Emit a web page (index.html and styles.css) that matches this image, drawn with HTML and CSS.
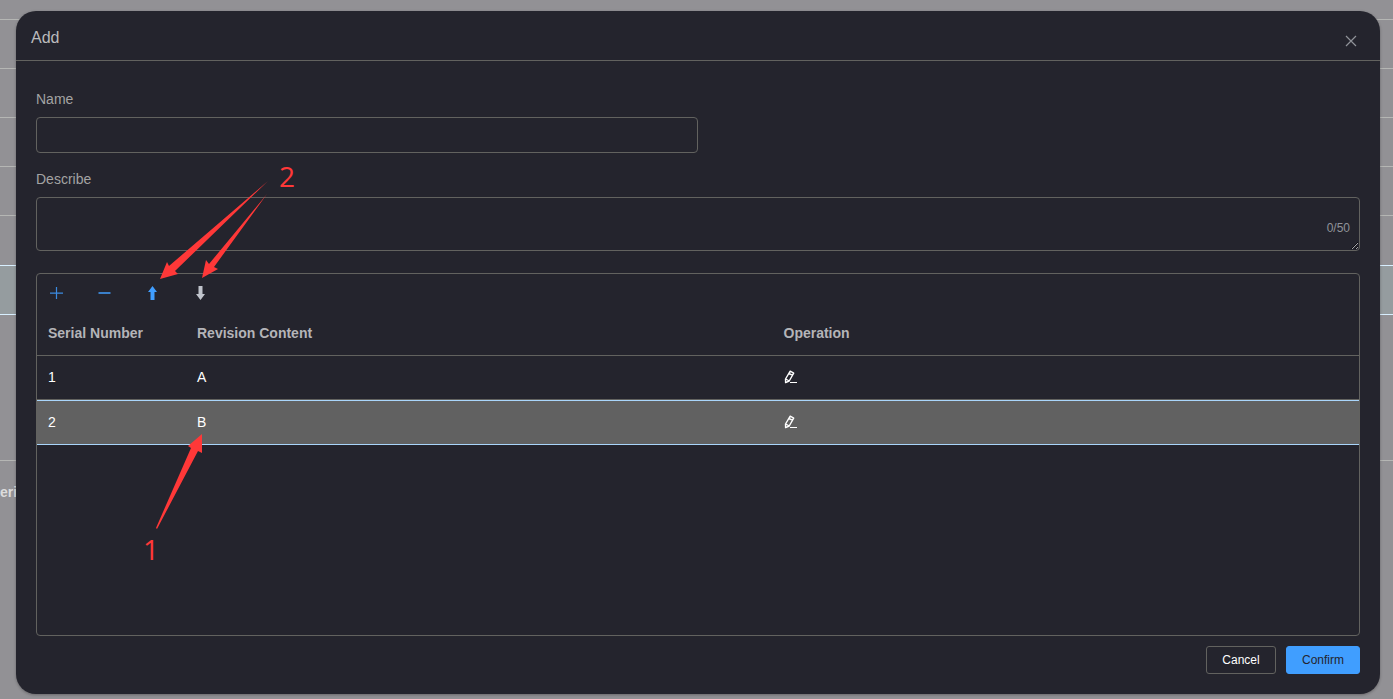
FILE: index.html
```html
<!DOCTYPE html>
<html lang="en">
<head>
<meta charset="utf-8">
<meta name="viewport" content="width=device-width, initial-scale=1">
<title>Add</title>
<link rel="stylesheet" href="styles.css">
</head>
<body>
<div class="backdrop">
  <div class="back-row back-row-first"></div>
  <div class="back-row"></div>
  <div class="back-row"></div>
  <div class="back-row"></div>
  <div class="back-row"></div>
  <div class="back-row back-row-selected"></div>
  <div class="back-panel"></div>
  <div class="back-heading">eri</div>
</div>

<div class="overlay">
  <section class="dialog" role="dialog" aria-labelledby="dialog-title">
    <header class="dialog-header">
      <h1 class="dialog-title" id="dialog-title">Add</h1>
      <button class="close" type="button" aria-label="Close">
        <svg width="12" height="12" viewBox="0 0 12 12"><path d="M1 1l10 10M11 1L1 11" stroke="#909399" stroke-width="1.2" fill="none"/></svg>
      </button>
    </header>
    <form class="dialog-body">
      <div class="field field-half">
        <label class="label" for="name">Name</label>
        <input class="input" id="name" type="text">
      </div>
      <div class="field">
        <label class="label" for="describe">Describe</label>
        <div class="textarea-wrap">
          <textarea class="textarea" id="describe" maxlength="50"></textarea>
          <span class="count">0/50</span>
        </div>
      </div>
      <div class="panel">
        <div class="toolbar">
          <button class="tool" type="button" aria-label="Add row">
            <svg width="14" height="14" viewBox="0 0 14 14"><path d="M1 7.2h13M7.5 1v12" stroke="#3b8ae0" stroke-width="1.2" fill="none"/></svg>
          </button>
          <button class="tool" type="button" aria-label="Remove row">
            <svg width="14" height="14" viewBox="0 0 14 14"><path d="M1.500 7h12" stroke="#3a7fc9" stroke-width="2" fill="none"/></svg>
          </button>
          <button class="tool" type="button" aria-label="Move up">
            <svg width="14" height="14" viewBox="0 0 14 14"><path d="M7.500 0L12 6H9.500v8h-4V6H3z" fill="#409eff"/></svg>
          </button>
          <button class="tool" type="button" aria-label="Move down">
            <svg width="14" height="14" viewBox="0 0 14 14"><path d="M7.500 14L12 8H9.500V0h-4v8H3z" fill="#c0c4cc"/></svg>
          </button>
        </div>
        <table class="table">
          <colgroup><col class="col-serial"><col><col></colgroup>
          <thead>
            <tr><th>Serial Number</th><th>Revision Content</th><th>Operation</th></tr>
          </thead>
          <tbody>
            <tr>
              <td>1</td><td>A</td>
              <td><button class="edit" type="button" aria-label="Edit row 1"><svg width="14" height="14" viewBox="0 0 14 14"><path d="M6.200 1.200L9.700 3.200 5.200 11 1.600 12.600 1.500 9zM5 3.300l3.500 2M1.800 9l3.400 2" stroke="#fff" stroke-width="1.400" stroke-linejoin="round" fill="none"/><path d="M6 12.500h7" stroke="#fff" fill="none"/></svg></button></td>
            </tr>
            <tr class="selected">
              <td>2</td><td>B</td>
              <td><button class="edit" type="button" aria-label="Edit row 2"><svg width="14" height="14" viewBox="0 0 14 14"><path d="M6.200 1.200L9.700 3.200 5.200 11 1.600 12.600 1.500 9zM5 3.300l3.500 2M1.800 9l3.400 2" stroke="#fff" stroke-width="1.400" stroke-linejoin="round" fill="none"/><path d="M6 12.500h7" stroke="#fff" fill="none"/></svg></button></td>
            </tr>
          </tbody>
        </table>
      </div>
      <footer class="actions">
        <button class="btn" type="button">Cancel</button>
        <button class="btn btn-primary" type="submit">Confirm</button>
      </footer>
    </form>
  </section>
</div>

<svg class="arrows" width="320" height="570" viewBox="0 0 320 570" aria-hidden="true">
  <g fill="#ff3838">
    <path d="M268 181L169 266 167 262 160 279 178 274 175 271z"/>
    <path d="M267 194L209 264 206 260 202 278 218 269 214 267z"/>
    <path d="M202 434L202 453 198 451 157 529 156 528 191 448 188 446z"/>
  </g>
</svg>
<span class="mark mark-two">2</span>
<span class="mark mark-one">1</span>
</body>
</html>
```
FILE: styles.css
```css
* {
  box-sizing: border-box;
}

body {
  margin: 0;
  height: 100vh;
  overflow: hidden;
  background: #929195;
  color: #bababc;
  font-family: "Liberation Sans", Arial, sans-serif;
  font-size: 14px;
  line-height: 20px;
}

button {
  padding: 0;
  border: 0;
  background: none;
  font: inherit;
  cursor: pointer;
}

svg {
  display: block;
}

.back-row {
  height: 49px;
  border-bottom: 1px solid #b5b6b4;
}

.back-row-first {
  height: 20px;
}

.back-row-selected {
  height: 50px;
  margin-top: 49px;
  border-top: 1px solid #d8efff;
  border-bottom-color: #d8efff;
  background: #959c9f;
}

.back-panel {
  height: 146px;
  border-bottom: 1px solid #b5b6b4;
}

.back-heading {
  padding-top: 21px;
  color: #dcdcdc;
  font-weight: bold;
}

.overlay {
  position: absolute;
  inset: 0;
  display: flex;
  padding: 11px 13px 5px 16px;
}

.dialog {
  flex: 1;
  display: flex;
  flex-direction: column;
  border-radius: 20px;
  background: #24242d;
  box-shadow: 0 1px 3px rgba(0, 0, 0, 0.3);
}

.dialog-header {
  display: flex;
  align-items: center;
  justify-content: space-between;
  height: 50px;
  padding: 4px 23px 0 15px;
  border-bottom: 1px solid #62625f;
}

.dialog-title {
  margin: 0;
  font-size: 16px;
  font-weight: normal;
  line-height: 24px;
}

.close {
  padding-top: 6px;
}

.dialog-body {
  flex: 1;
  display: flex;
  flex-direction: column;
  padding: 28px 20px 20px;
}

.field {
  margin-bottom: 22px;
}

.field-half {
  width: 50%;
  margin-bottom: 16px;
}

.label {
  display: block;
  margin-bottom: 8px;
  color: #a3a3a3;
}

.input,
.textarea {
  display: block;
  width: 100%;
  border: 1px solid #62625f;
  border-radius: 4px;
  outline: 0;
  background: transparent;
  color: #fff;
  font: inherit;
}

.input {
  height: 36px;
  padding: 0 12px;
}

.textarea-wrap {
  position: relative;
}

.textarea {
  height: 54px;
  padding: 5px 12px;
  resize: vertical;
}

.count {
  position: absolute;
  right: 10px;
  bottom: 13px;
  color: #909399;
  font-size: 12px;
}

.panel {
  flex: 1;
  border: 1px solid #62625f;
  border-radius: 4px;
}

.toolbar {
  display: flex;
  gap: 34px;
  padding: 12px 12px 11px;
}

.table {
  width: 100%;
  border-spacing: 0;
  table-layout: fixed;
}

.col-serial {
  width: 149px;
}

.table th,
.table td {
  height: 44px;
  padding: 0 11px;
  border-bottom: 1px solid #62625f;
  text-align: left;
}

.table th {
  height: 45px;
  color: #b4b4b8;
  font-weight: bold;
}

.table td {
  padding-bottom: 2px;
  color: #fff;
}

.table .selected td {
  height: 45px;
  border-top: 1px solid #a9d5fb;
  border-bottom-color: #a9d5fb;
  background: #616161;
}

.edit {
  display: block;
}

.actions {
  display: flex;
  justify-content: flex-end;
  gap: 10px;
  padding-top: 10px;
}

.btn {
  min-width: 70px;
  height: 28px;
  padding: 0 15px;
  border: 1px solid #62625f;
  border-radius: 3px;
  color: #fff;
  font-size: 12px;
}

.btn-primary {
  border-color: #409eff;
  background: #409eff;
  color: #24242d;
}

.arrows {
  position: absolute;
  top: 0;
  left: 0;
  pointer-events: none;
}

.mark {
  position: absolute;
  color: #ff3838;
  font-family: "Open Sans", sans-serif;
  font-size: 28px;
  line-height: 36px;
}

.mark-two {
  top: 158px;
  left: 279px;
}

.mark-one {
  top: 531px;
  left: 143px;
}
```
